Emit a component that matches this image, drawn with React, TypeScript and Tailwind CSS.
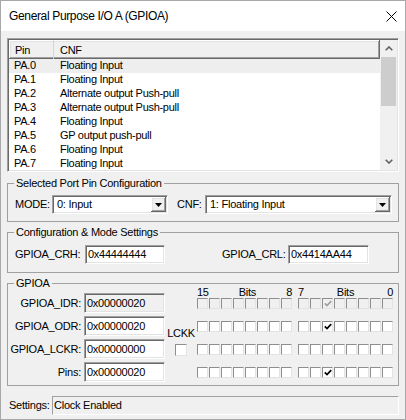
import type { ReactNode } from "react";

const pins = [
  ["PA.0", "Floating Input"],
  ["PA.1", "Floating Input"],
  ["PA.2", "Alternate output Push-pull"],
  ["PA.3", "Alternate output Push-pull"],
  ["PA.4", "Floating Input"],
  ["PA.5", "GP output push-pull"],
  ["PA.6", "Floating Input"],
  ["PA.7", "Floating Input"],
];

// classic win32 3d borders
const sunken =
  "border border-t-[#a0a0a0] border-l-[#a0a0a0] border-r-white border-b-white shadow-[inset_1px_1px_0_#696969,inset_-1px_-1px_0_#e3e3e3]";
const raised =
  "shadow-[inset_-1px_-1px_0_#696969,inset_1px_1px_0_#ffffff,inset_-2px_-2px_0_#a0a0a0,inset_2px_2px_0_#e3e3e3]";

function Chevron({ up }: { up?: boolean }) {
  return (
    <svg width="8" height="5" viewBox="0 0 8 5">
      <path
        d={up ? "M0.7 4.3 L4 1 L7.3 4.3" : "M0.7 0.7 L4 4 L7.3 0.7"}
        fill="none"
        stroke="#606060"
        strokeWidth="1.6"
      />
    </svg>
  );
}

function Combo({ value, className }: { value: string; className: string }) {
  return (
    <div className={`${sunken} flex h-[19px] bg-white p-[1px] ${className}`}>
      <span className="flex-1 pl-[3px] leading-[15px]">{value}</span>
      <span className={`flex w-[15px] items-center justify-center bg-[#f0f0f0] ${raised}`}>
        <svg width="7" height="4" viewBox="0 0 7 4">
          <path d="M0 0h7L3.5 4z" fill="#000" />
        </svg>
      </span>
    </div>
  );
}

function Field({ value, className, readOnly }: { value: string; className: string; readOnly?: boolean }) {
  return (
    <div
      className={`${sunken} flex items-center pl-[2px] ${readOnly ? "bg-[#f0f0f0]" : "bg-white"} ${className}`}
    >
      {value}
    </div>
  );
}

function Group({ title, children, className }: { title: string; children: ReactNode; className: string }) {
  return (
    <fieldset className={`border border-[#a0a0a0] ${className}`}>
      <legend className="ml-[6px] px-[2px] leading-[14px]">{title}</legend>
      {children}
    </fieldset>
  );
}

function Bit({ checked, disabled }: { checked?: boolean; disabled?: boolean }) {
  return (
    <div
      className={`flex h-[11px] w-[11px] items-center justify-center border border-t-[#8e8e8e] border-l-[#8e8e8e] border-r-[#e3e3e3] border-b-[#e3e3e3] ${disabled ? "bg-[#f0f0f0]" : "bg-white"}`}
    >
      {checked && (
        <svg width="8" height="7" viewBox="0 0 8 7">
          <path
            d="M0.8 3.4 L3 5.6 L7.2 1.2"
            fill="none"
            stroke={disabled ? "#a0a0a0" : "#000"}
            strokeWidth="1.7"
          />
        </svg>
      )}
    </div>
  );
}

function BitRow({ value, disabled }: { value: number; disabled?: boolean }) {
  const hi = [15, 14, 13, 12, 11, 10, 9, 8];
  const lo = [7, 6, 5, 4, 3, 2, 1, 0];
  return (
    <div className="flex gap-[6px]">
      <div className="flex gap-[1px]">
        {hi.map((b) => (
          <Bit key={b} checked={((value >> b) & 1) === 1} disabled={disabled} />
        ))}
      </div>
      <div className="flex gap-[1px]">
        {lo.map((b) => (
          <Bit key={b} checked={((value >> b) & 1) === 1} disabled={disabled} />
        ))}
      </div>
    </div>
  );
}

export default function App() {
  const regs = [
    { name: "GPIOA_IDR:", value: "0x00000020", readOnly: true },
    { name: "GPIOA_ODR:", value: "0x00000020" },
    { name: "GPIOA_LCKR:", value: "0x00000000" },
    { name: "Pins:", value: "0x00000020" },
  ];

  return (
    <div className="flex h-[420px] w-[406px] flex-col border border-[#a8a8a8] bg-[#f0f0f0] font-['Liberation_Sans',Arial,sans-serif] text-[11px] tracking-[-0.25px] text-black">
      {/* title bar */}
      <div className="flex h-[30px] items-center justify-between bg-white pl-[8px] pr-[8px]">
        <span className="text-[12px] tracking-[-0.35px]">General Purpose I/O A (GPIOA)</span>
        <svg width="11" height="11" viewBox="0 0 11 11">
          <path d="M0.5 0.5L10.5 10.5M10.5 0.5L0.5 10.5" stroke="#000" strokeWidth="1" />
        </svg>
      </div>

      <div className="flex flex-col px-[6px]">
        {/* pin list */}
        <div className={`${sunken} mt-[7px] flex h-[134px] bg-white p-[1px]`}>
          <div className="flex flex-1 flex-col tracking-[-0.3px]">
            <div className={`flex h-[19px] bg-[#f0f0f0] ${raised}`}>
              <div className="flex w-[45px] items-center border-r border-[#d5d5d5] pl-[6px] pt-[2px]">Pin</div>
              <div className="flex flex-1 items-center pl-[6px] pt-[2px]">CNF</div>
            </div>
            {pins.map(([pin, cnf], i) => (
              <div key={pin} className={`flex h-[14px] items-center ${i === 0 ? "bg-[#eeeeee]" : ""}`}>
                <span className="w-[45px] pl-[5px]">{pin}</span>
                <span className="pl-[6px]">{cnf}</span>
              </div>
            ))}
          </div>
          <div className="flex w-[17px] flex-col bg-[#f0f0f0]">
            <div className="flex h-[17px] items-center justify-center">
              <Chevron up />
            </div>
            <div className="mx-[1px] h-[49px] bg-[#cdcdcd]" />
            <div className="flex-1" />
            <div className="flex h-[17px] items-center justify-center">
              <Chevron />
            </div>
          </div>
        </div>

        <Group title="Selected Port Pin Configuration" className="mt-[4px]">
          <div className="flex items-center pb-[7px] pl-[7px] pt-[5px]">
            <span className="w-[37px]">MODE:</span>
            <Combo value="0: Input" className="w-[116px]" />
            <span className="ml-[9px] w-[28px]">CNF:</span>
            <Combo value="1: Floating Input" className="w-[187px]" />
          </div>
        </Group>

        <Group title="Configuration & Mode Settings" className="mt-[3px]">
          <div className="flex items-center pb-[8px] pl-[7px] pt-[6px]">
            <span className="w-[70px]">GPIOA_CRH:</span>
            <Field value="0x44444444" className="h-[19px] w-[80px]" />
            <span className="ml-[57px] w-[66px]">GPIOA_CRL:</span>
            <Field value="0x4414AA44" className="h-[19px] w-[81px]" />
          </div>
        </Group>

        <Group title="GPIOA" className="mt-[3px]">
          <div className="flex pb-[3px]">
            <div className="flex flex-col gap-[3px] pt-[3px]">
              {regs.map((r) => (
                <div key={r.name} className="flex items-center">
                  <span className="w-[73px] text-right">{r.name}</span>
                  <Field value={r.value} readOnly={r.readOnly} className="ml-[3px] h-[20px] w-[81px]" />
                </div>
              ))}
            </div>
            <div className="flex w-[32px] flex-col items-center pt-[37px]">
              <span className="leading-[12px]">LCKK</span>
              <div className="mt-[5px] h-[12px] w-[12px] border border-t-[#8e8e8e] border-l-[#8e8e8e] border-r-[#e3e3e3] border-b-[#e3e3e3] bg-white" />
            </div>
            <div className="-mt-[4px] flex flex-col">
              <div className="flex h-[12px] gap-[6px] leading-[12px]">
                <div className="flex w-[95px] justify-between">
                  <span>15</span>
                  <span>Bits</span>
                  <span>8</span>
                </div>
                <div className="flex w-[95px] justify-between">
                  <span>7</span>
                  <span>Bits</span>
                  <span>0</span>
                </div>
              </div>
              <div className="flex flex-col gap-[12px]">
                <BitRow value={0x20} disabled />
                <BitRow value={0x20} />
                <BitRow value={0x00} />
                <BitRow value={0x20} />
              </div>
            </div>
          </div>
        </Group>

        {/* status line */}
        <div className="mt-[10px] flex items-center">
          <span className="w-[45px] pl-[2px]">Settings:</span>
          <div className="flex h-[19px] flex-1 items-center border border-t-[#a0a0a0] border-l-[#a0a0a0] border-r-white border-b-white pl-[1px]">
            Clock Enabled
          </div>
        </div>
      </div>
    </div>
  );
}
